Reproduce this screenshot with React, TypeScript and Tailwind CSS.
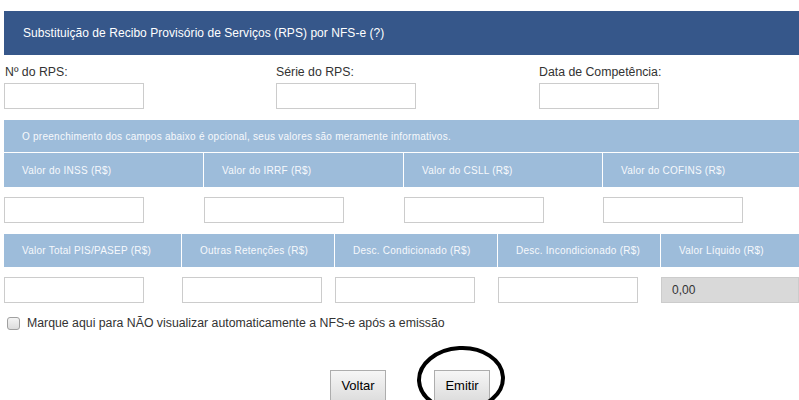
import React from 'react';

const font = { fontFamily: '"Liberation Sans", Arial, sans-serif' };

function Field({ className = '' }: { className?: string }) {
  return <input type="text" className={`h-[26px] w-[140px] border border-[#cccccc] bg-white px-2 outline-none ${className}`} />;
}

const row1 = [
  { label: 'Valor do INSS (R$)', w: 'w-[199px]' },
  { label: 'Valor do IRRF (R$)', w: 'w-[199px]' },
  { label: 'Valor do CSLL (R$)', w: 'w-[198px]' },
  { label: 'Valor do COFINS (R$)', w: 'flex-1' },
];

const row3 = [
  { label: 'Valor Total PIS/PASEP (R$)', w: 'w-[177px]' },
  { label: 'Outras Retenções (R$)', w: 'w-[152px]' },
  { label: 'Desc. Condicionado (R$)', w: 'w-[162px]' },
  { label: 'Desc. Incondicionado (R$)', w: 'w-[162px]' },
  { label: 'Valor Líquido (R$)', w: 'flex-1' },
];

export default function App() {
  return (
    <div className="h-[400px] w-[799px] overflow-hidden bg-white pl-[4px] text-[#333]" style={font}>
      {/* Header */}
      <div className="mt-[11px] flex h-[44px] items-center bg-[#36578a] pl-[19px] text-[12px] tracking-[0.05px] text-white">
        Substituição de Recibo Provisório de Serviços (RPS) por NFS-e (?)
      </div>

      {/* RPS fields */}
      <div className="flex pt-[9px] text-[12.3px]">
        <div className="w-[272px]">
          <div className="pl-[1px] leading-[17px]">Nº do RPS:</div>
          <Field className="mt-[2px]" />
        </div>
        <div className="w-[263px]">
          <div className="leading-[17px]">Série do RPS:</div>
          <Field className="mt-[2px]" />
        </div>
        <div>
          <div className="leading-[17px]">Data de Competência:</div>
          <Field className="mt-[2px] !w-[120px]" />
        </div>
      </div>

      {/* Optional values */}
      <div className="mt-[11px] flex h-[32px] items-center bg-[#9dbcda] pl-[18px] text-[10px] tracking-[0.25px] text-[#f7f9fc]">
        O preenchimento dos campos abaixo é opcional, seus valores são meramente informativos.
      </div>
      <div className="mt-px flex gap-px">
        {row1.map((c) => (
          <div key={c.label} className={`${c.w} flex h-[34px] items-center bg-[#9dbcda] pl-[18px] text-[10px] tracking-[0.25px] text-[#f7f9fc]`}>
            {c.label}
          </div>
        ))}
      </div>
      <div className="mt-[10px] flex gap-px">
        {row1.map((c) => (
          <div key={c.label} className={c.w}>
            <Field />
          </div>
        ))}
      </div>

      <div className="mt-[11px] flex gap-px">
        {row3.map((c) => (
          <div key={c.label} className={`${c.w} flex h-[33px] items-center bg-[#9dbcda] pl-[18px] text-[10px] tracking-[0.25px] text-[#f7f9fc]`}>
            {c.label}
          </div>
        ))}
      </div>
      <div className="mt-[10px] flex gap-px">
        {row3.slice(0, 4).map((c) => (
          <div key={c.label} className={c.w}>
            <Field />
          </div>
        ))}
        <div className="flex h-[26px] flex-1 items-center border border-[#cccccc] bg-[#d9d9d9] pl-[10px] text-[12px] text-[#333]">
          0,00
        </div>
      </div>

      {/* Checkbox */}
      <label className="mt-[14px] flex items-center pl-[3px] text-[12.3px]">
        <span className="h-[13px] w-[13px] rounded-[3px] border border-[#a0a0a0] bg-gradient-to-b from-[#f4f4f4] to-[#dcdcdc]" />
        <span className="ml-[7px] leading-[13px]">Marque aqui para NÃO visualizar automaticamente a NFS-e após a emissão</span>
      </label>

      {/* Buttons */}
      <div className="mt-[40px] flex gap-[48px] pl-[326px]">
        <button className="h-[32px] w-[56px] border border-[#adadad] bg-gradient-to-b from-[#f6f6f6] to-[#dddddd] text-[13px] text-black">
          Voltar
        </button>
        <div className="relative">
          <button className="h-[32px] w-[56px] border border-[#adadad] bg-gradient-to-b from-[#f6f6f6] to-[#dddddd] text-[13px] text-black">
            Emitir
          </button>
          <svg className="pointer-events-none absolute left-[-19px] top-[-26px]" width="94" height="70" viewBox="0 0 94 70">
            <ellipse cx="46" cy="35" rx="42" ry="31" fill="none" stroke="#000" strokeWidth="4" transform="rotate(-3 46 35)" />
          </svg>
        </div>
      </div>
    </div>
  );
}
